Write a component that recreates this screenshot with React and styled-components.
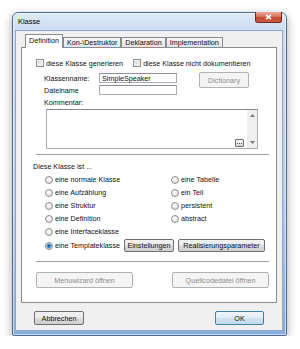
import React from 'react'
import styled, { createGlobalStyle, css } from 'styled-components'

const GlobalStyle = createGlobalStyle`
  html, body { margin: 0; padding: 0; background: #fff; }
  body {
    font-family: "Liberation Sans", Arial, sans-serif;
    font-size: 7.2px;
    color: #111;
  }
  * { box-sizing: border-box; }
`

const Page = styled.div`
  padding: 12px 0 0 12px;
`

const Window = styled.div`
  width: 275px;
  height: 324px;
  display: flex;
  flex-direction: column;
  padding: 0 4px 5px 3px;
  border: 1px solid #4d6a92;
  border-radius: 6px 6px 2px 2px;
  background: linear-gradient(to bottom, #dfeaf7 0px, #cbdcf0 18px, #b6cdea 55%, #86acdd 100%);
  box-shadow: 0 3px 10px rgba(0, 0, 0, 0.35), inset 0 0 0 1px rgba(255, 255, 255, 0.55);
`

const TitleBar = styled.div`
  height: 18px;
  display: flex;
  justify-content: space-between;
  align-items: flex-start;
`

const Title = styled.span`
  padding: 4px 0 0 2px;
  font-size: 7.4px;
  color: #000;
`

const CloseButton = styled.div`
  width: 27px;
  height: 11px;
  margin-top: -1px;
  display: flex;
  align-items: center;
  justify-content: center;
  border: 1px solid #6b2a22;
  border-top: none;
  border-radius: 0 0 3px 3px;
  background: linear-gradient(#eaa99b, #d9745f 45%, #c44a33 55%, #cc5a42);
`

const Client = styled.div`
  flex: 1;
  display: flex;
  flex-direction: column;
  padding-top: 3px;
  background: #f0f0f0;
  box-shadow: 0 0 0 1px #91a8c7;
`

const TabStrip = styled.div`
  height: 13px;
  margin: 0 5px;
  padding-left: 4px;
  display: flex;
  align-items: flex-end;
  position: relative;
  z-index: 1;
`

const Tab = styled.div`
  height: 10px;
  padding: 0 3px;
  display: flex;
  align-items: center;
  border: 1px solid #898c95;
  border-bottom: none;
  background: linear-gradient(#f6f6f6, #e3e3e3);
  white-space: nowrap;
  ${p => p.$active && css`
    height: 14px;
    margin-bottom: -1px;
    padding: 0 3px 2px;
    background: #fff;
  `}
`

const Panel = styled.div`
  height: 256px;
  margin: 0 5px;
  padding: 0 7px 0 14px;
  display: flex;
  flex-direction: column;
  border: 1px solid #898c95;
  background: #fff;
`

const CheckRow = styled.div`
  height: 10px;
  margin-top: 10px;
  display: flex;
  align-items: center;
  gap: 10px;
`

const CheckItem = styled.label`
  display: flex;
  align-items: center;
  gap: 2px;
  white-space: nowrap;
`

const CheckBox = styled.span`
  width: 8px;
  height: 8px;
  border: 1px solid #8f8f8f;
  background: linear-gradient(135deg, #d3d3d3, #f9f9f9);
  box-shadow: inset 0 0 0 1px #f4f4f4;
`

const FieldGrid = styled.div`
  margin: 4px 0 0 8px;
  display: grid;
  grid-template-columns: 55px 78px 72px;
  grid-template-rows: 12px 12px;
  align-items: center;
`

const FieldLabel = styled.span`
  grid-column: 1;
  grid-row: ${p => p.$row};
  white-space: nowrap;
`

const TextBox = styled.div`
  grid-column: 2;
  grid-row: ${p => p.$row};
  height: 10px;
  padding-left: 2px;
  display: flex;
  align-items: center;
  border: 1px solid #abadb3;
  border-top-color: #8d9096;
  background: #fff;
`

const Label = styled.div`
  height: 12px;
  margin-top: ${p => p.$top || 0}px;
  margin-left: ${p => p.$indent}px;
  display: flex;
  align-items: center;
`

const Memo = styled.div`
  position: relative;
  width: 212px;
  height: 40px;
  margin: 1px 0 0 10px;
  display: flex;
  border: 1px solid #abadb3;
  border-top-color: #84878d;
  background: #fff;
`

const MemoText = styled.div`
  flex: 1;
`

const ScrollBar = styled.div`
  width: 10px;
  display: flex;
  flex-direction: column;
  justify-content: space-between;
  align-items: center;
  padding: 4px 0;
  background: #f0f0f0;
`

const EllipsisButton = styled.div`
  position: absolute;
  right: 13px;
  bottom: 1px;
  width: 9px;
  height: 8px;
  display: flex;
  align-items: center;
  justify-content: center;
  border: 1px solid #707070;
  border-radius: 1px;
  background: linear-gradient(#f4f4f4, #d8d8d8);
`

const Separator = styled.div`
  height: 2px;
  margin-top: ${p => p.$top}px;
  border-top: 1px solid #a0a0a0;
  border-bottom: 1px solid #fff;
`

const RadioGrid = styled.div`
  margin: 1px 0 0 9px;
  display: grid;
  grid-template-columns: 126px auto;
  grid-template-rows: repeat(5, 13px) 15px;
  align-items: center;
`

const RadioItem = styled.label`
  display: flex;
  align-items: center;
  gap: 2px;
  white-space: nowrap;
`

const Radio = styled.span`
  width: 8px;
  height: 8px;
  border-radius: 50%;
  border: 1px solid #8e8f8f;
  background: radial-gradient(circle at 40% 35%, #fdfdfd, #d6d6d6);
  ${p => p.$checked && css`
    background: radial-gradient(circle, #0e4a7a 0, #2f7fbf 1.4px, #8fc0e6 2.4px, #eeeeee 3px);
  `}
`

const TemplateRow = styled.div`
  grid-column: 1 / -1;
  display: flex;
  align-items: center;
  gap: 4px;
`

const Button = styled.button`
  height: ${p => p.$h || 16}px;
  width: ${p => p.$w}px;
  padding: 0;
  font: inherit;
  color: #111;
  white-space: nowrap;
  border: 1px solid #707070;
  border-radius: 2px;
  background: linear-gradient(#f2f2f2 0%, #ebebeb 50%, #dddddd 50%, #cfcfcf 100%);
  ${p => p.$disabled && css`
    color: #8d8d8d;
    border-color: #adb2b5;
    background: #f4f4f4;
  `}
  ${p => p.$primary && css`
    border-color: #3c7fb1;
    background: linear-gradient(#eef4f9 0%, #e2ecf5 50%, #d0e1ef 50%, #c5d9ea 100%);
  `}
`

const SideButton = styled(Button)`
  grid-column: 3;
  grid-row: 1 / 3;
  align-self: start;
  margin-left: 22px;
`

const ActionRow = styled.div`
  margin-top: ${p => p.$top}px;
  padding: 0 ${p => p.$side || 0}px;
  display: flex;
  justify-content: space-between;
`

const Arrow = ({ down }) => (
  <svg width="5" height="3" viewBox="0 0 5 3">
    <path d={down ? 'M0 0h5L2.5 3z' : 'M0 3h5L2.5 0z'} fill="#7b7b7b" />
  </svg>
)

const leftRadios = ['eine normale Klasse', 'eine Aufzählung', 'eine Struktur', 'eine Definition']
const rightRadios = ['eine Tabelle', 'ein Teil', 'persistent', 'abstract']

export default function App() {
  return (
    <Page>
      <GlobalStyle />
      <Window>
        <TitleBar>
          <Title>Klasse</Title>
          <CloseButton>
            <svg width="7" height="6" viewBox="0 0 7 6">
              <path d="M1 0.8L6 5.2M6 0.8L1 5.2" stroke="#fff" strokeWidth="1.6" />
            </svg>
          </CloseButton>
        </TitleBar>
        <Client>
          <TabStrip>
            <Tab $active>Definition</Tab>
            <Tab>Kon-\Destruktor</Tab>
            <Tab>Deklaration</Tab>
            <Tab>Implementation</Tab>
          </TabStrip>
          <Panel>
            <CheckRow>
              <CheckItem><CheckBox />diese Klasse generieren</CheckItem>
              <CheckItem><CheckBox />diese Klasse nicht dokumentieren</CheckItem>
            </CheckRow>
            <FieldGrid>
              <FieldLabel $row={1}>Klassenname:</FieldLabel>
              <TextBox $row={1}>SimpleSpeaker</TextBox>
              <SideButton $disabled $w={50}>Dictionary</SideButton>
              <FieldLabel $row={2}>Dateiname</FieldLabel>
              <TextBox $row={2} />
            </FieldGrid>
            <Label $indent={8}>Kommentar:</Label>
            <Memo>
              <MemoText />
              <ScrollBar>
                <Arrow />
                <Arrow down />
              </ScrollBar>
              <EllipsisButton>
                <svg width="5" height="1" viewBox="0 0 5 1">
                  <path d="M0 0h1v1H0zM2 0h1v1H2zM4 0h1v1H4z" fill="#555" />
                </svg>
              </EllipsisButton>
            </Memo>
            <Separator $top={5} />
            <Label $indent={-3} $top={4}>Diese Klasse ist ...</Label>
            <RadioGrid>
              {leftRadios.map((text, i) => (
                <React.Fragment key={text}>
                  <RadioItem><Radio />{text}</RadioItem>
                  <RadioItem><Radio />{rightRadios[i]}</RadioItem>
                </React.Fragment>
              ))}
              <RadioItem><Radio />eine Interfaceklasse</RadioItem>
              <span />
              <TemplateRow>
                <RadioItem><Radio $checked />eine Templateklasse</RadioItem>
                <Button $w={50} $h={13}>Einstellungen</Button>
                <Button $w={87} $h={13}>Realisierungsparameter</Button>
              </TemplateRow>
            </RadioGrid>
            <Separator $top={8} />
            <ActionRow $top={9}>
              <Button $disabled $w={97}>Menuwizard öffnen</Button>
              <Button $disabled $w={97}>Quellcodedatei öffnen</Button>
            </ActionRow>
          </Panel>
          <ActionRow $top={8} $side={18}>
            <Button $w={50} $h={14}>Abbrechen</Button>
            <Button $primary $w={49} $h={14}>OK</Button>
          </ActionRow>
        </Client>
      </Window>
    </Page>
  )
}
